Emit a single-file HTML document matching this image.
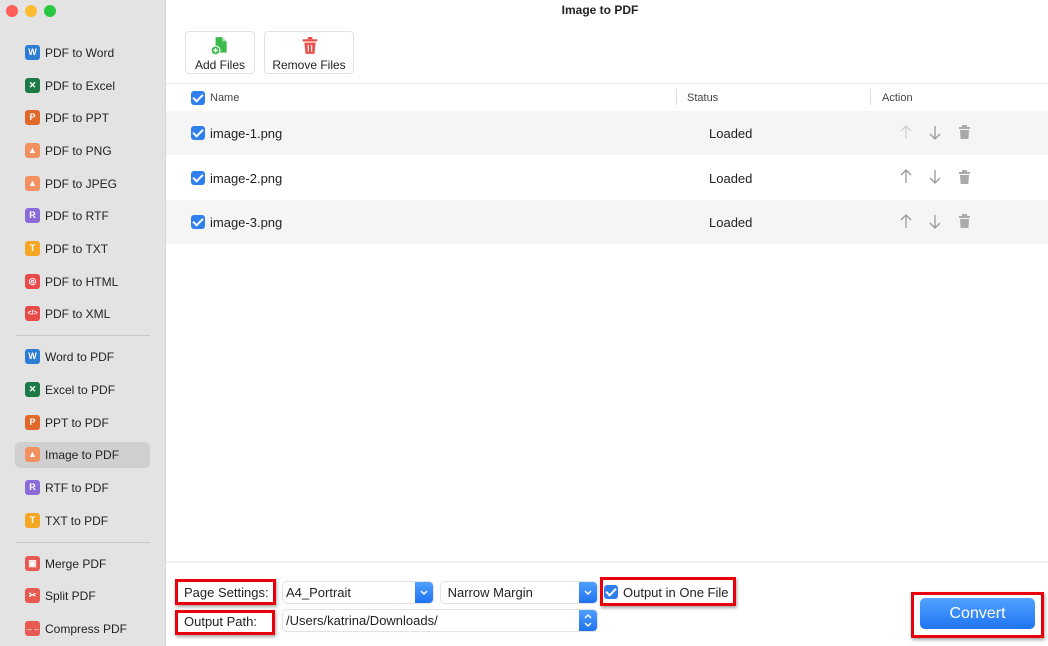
<!DOCTYPE html>
<html><head><meta charset="utf-8"><style>
*{margin:0;padding:0;box-sizing:border-box}
body{width:1048px;height:646px;overflow:hidden;font-family:"Liberation Sans",sans-serif;background:#fff;position:relative;color:#222}
.abs{position:absolute}
#side{left:0;top:0;width:166px;height:646px;background:#e3e3e3;border-right:1px solid #d6d6d6}
.dot{position:absolute;top:5px;width:12px;height:12px;border-radius:50%}
.it{position:absolute;left:25px;font-size:12px;color:#222;height:16px;line-height:16px;white-space:nowrap}
.ic{display:inline-block;width:15px;height:15px;border-radius:3px;vertical-align:top;margin-right:5px;color:#fff;font-size:9px;font-weight:bold;text-align:center;line-height:15px}
.sel{position:absolute;left:15px;top:442px;width:135px;height:26px;background:#cfcfcf;border-radius:5px}
.div{position:absolute;left:16px;width:134px;height:1px;background:#c9c9c9}
.cb{position:absolute;width:14px;height:14px;border-radius:3px;background:#2f80ed}
.cb:after{content:"";position:absolute;left:4px;top:1px;width:4px;height:8px;border:solid #fff;border-width:0 2px 2px 0;transform:rotate(45deg)}
.row{position:absolute;left:166px;width:882px;height:44px}
.rt{position:absolute;font-size:13px;color:#222}
.btn{position:absolute;top:31px;height:43px;border:1px solid #e2e2e2;border-radius:4px;background:#fff;font-size:12px;text-align:center;color:#222}
.red{position:absolute;border:3px solid #e8000b;box-shadow:1px 2px 3px rgba(0,0,0,.35)}
.fld{position:absolute;height:21px;background:#fff;border-radius:4px;box-shadow:0 0 0 1px #e3e3e3,0 1px 1px rgba(0,0,0,.1);font-size:13px;line-height:21px;padding-left:3px;color:#222}
.arr{position:absolute;right:0;top:0;width:18px;height:21px;background:linear-gradient(#4fa0ff,#1f72f0);border-radius:0 4px 4px 0}
.lbl{position:absolute;font-size:13px;color:#222}
</style></head><body>
<div id="side" class="abs">
<div class="dot" style="left:6px;background:#fe5f57"></div>
<div class="dot" style="left:25px;background:#febc2e"></div>
<div class="dot" style="left:44px;background:#28c840"></div>
<div class="sel"></div>
<div class="it" style="top:45px"><span class="ic" style="background:#2b7cd3">W</span>PDF to Word</div>
<div class="it" style="top:78px"><span class="ic" style="background:#1d7a47">✕</span>PDF to Excel</div>
<div class="it" style="top:110px"><span class="ic" style="background:#e2682a">P</span>PDF to PPT</div>
<div class="it" style="top:143px"><span class="ic" style="background:#f39060">▲</span>PDF to PNG</div>
<div class="it" style="top:176px"><span class="ic" style="background:#f39060">▲</span>PDF to JPEG</div>
<div class="it" style="top:208px"><span class="ic" style="background:#8c6bd8">R</span>PDF to RTF</div>
<div class="it" style="top:241px"><span class="ic" style="background:#f5a623">T</span>PDF to TXT</div>
<div class="it" style="top:274px"><span class="ic" style="background:#e84a4a">◎</span>PDF to HTML</div>
<div class="it" style="top:306px"><span class="ic" style="background:#e84a4a;font-size:7px">&lt;/&gt;</span>PDF to XML</div>
<div class="div" style="top:335px"></div>
<div class="it" style="top:349px"><span class="ic" style="background:#2b7cd3">W</span>Word to PDF</div>
<div class="it" style="top:382px"><span class="ic" style="background:#1d7a47">✕</span>Excel to PDF</div>
<div class="it" style="top:415px"><span class="ic" style="background:#e2682a">P</span>PPT to PDF</div>
<div class="it" style="top:447px"><span class="ic" style="background:#f39060">▲</span>Image to PDF</div>
<div class="it" style="top:480px"><span class="ic" style="background:#8c6bd8">R</span>RTF to PDF</div>
<div class="it" style="top:513px"><span class="ic" style="background:#f5a623">T</span>TXT to PDF</div>
<div class="div" style="top:542px"></div>
<div class="it" style="top:556px"><span class="ic" style="background:#e85a50">▣</span>Merge PDF</div>
<div class="it" style="top:588px"><span class="ic" style="background:#e85a50">✂</span>Split PDF</div>
<div class="it" style="top:621px"><span class="ic" style="background:#e85a50;font-size:8px">→←</span>Compress PDF</div>
</div>

<div class="abs" style="left:166px;width:868px;top:3px;text-align:center;font-size:12px;font-weight:bold;color:#222">Image to PDF</div>

<div class="btn" style="left:185px;width:70px">
<svg width="20" height="20" viewBox="0 0 18 18" style="position:absolute;left:24px;top:4px"><path d="M5 1h6l4 4v10H5z" fill="#3dba4e"/><path d="M11 1v4h4" fill="#9be0a5"/><circle cx="5" cy="13" r="4" fill="#3dba4e" stroke="#fff" stroke-width="1"/><path d="M5 11v4M3 13h4" stroke="#fff" stroke-width="1.3"/></svg>
<div style="position:absolute;top:26px;width:100%">Add Files</div></div>
<div class="btn" style="left:264px;width:90px">
<svg width="18" height="18" viewBox="0 0 16 16" style="position:absolute;left:36px;top:5px"><rect x="1.5" y="2" width="13" height="2" fill="#e8504a"/><rect x="6" y="0" width="4" height="2" fill="#e8504a"/><path d="M3 5h10l-1 10H4z" fill="#e8504a"/><path d="M6.5 7v6M9.5 7v6" stroke="#fff" stroke-width="1"/></svg>
<div style="position:absolute;top:26px;width:100%">Remove Files</div></div>

<div class="abs" style="left:166px;top:83px;width:882px;height:1px;background:#ebebeb"></div>
<div class="cb" style="left:191px;top:91px"></div>
<div class="abs" style="left:210px;top:92px;font-size:11px;color:#444">Name</div>
<div class="abs" style="left:676px;top:89px;width:1px;height:16px;background:#ddd"></div>
<div class="abs" style="left:687px;top:92px;font-size:11px;color:#444">Status</div>
<div class="abs" style="left:870px;top:89px;width:1px;height:16px;background:#ddd"></div>
<div class="abs" style="left:882px;top:92px;font-size:11px;color:#444">Action</div>

<div class="row" style="top:111px;background:#f5f5f5"></div>
<div class="row" style="top:200px;background:#f5f5f5"></div>

<div class="cb" style="left:191px;top:126px"></div><div class="rt" style="left:210px;top:126px">image-1.png</div><div class="rt" style="left:709px;top:126px">Loaded</div>
<div class="cb" style="left:191px;top:171px"></div><div class="rt" style="left:210px;top:171px">image-2.png</div><div class="rt" style="left:709px;top:171px">Loaded</div>
<div class="cb" style="left:191px;top:215px"></div><div class="rt" style="left:210px;top:215px">image-3.png</div><div class="rt" style="left:709px;top:215px">Loaded</div>

<svg class="abs" style="left:898px;top:124px" width="80" height="110" viewBox="0 0 80 110">
<g fill="none" stroke-width="1.3">
<path d="M8 2v13M3 7l5-5 5 5" stroke="#d0d0d0"/><path d="M37 2v13M32 10l5 5 5-5" stroke="#999"/>
<path d="M8 46v13M3 51l5-5 5 5" stroke="#999"/><path d="M37 46v13M32 54l5 5 5-5" stroke="#999"/>
<path d="M8 91v13M3 96l5-5 5 5" stroke="#999"/><path d="M37 91v13M32 99l5 5 5-5" stroke="#999"/>
</g>
<g fill="#aaa"><rect x="61" y="3" width="11" height="2"/><rect x="64" y="1" width="5" height="2"/><path d="M62 6h9l-.6 9h-7.8z"/>
<rect x="61" y="48" width="11" height="2"/><rect x="64" y="46" width="5" height="2"/><path d="M62 51h9l-.6 9h-7.8z"/>
<rect x="61" y="92" width="11" height="2"/><rect x="64" y="90" width="5" height="2"/><path d="M62 95h9l-.6 9h-7.8z"/></g>
</svg>

<div class="abs" style="left:166px;top:561px;width:882px;height:2px;background:#f0f0f0"></div>

<div class="red" style="left:175px;top:579px;width:101px;height:26px"></div>
<div class="lbl" style="left:184px;top:585px">Page Settings:</div>
<div class="fld" style="left:283px;top:582px;width:150px">A4_Portrait<div class="arr"><svg width="18" height="21"><path d="M6 9l3 3 3-3" stroke="#fff" stroke-width="1.5" fill="none"/></svg></div></div>
<div class="fld" style="left:441px;top:582px;width:156px">&nbsp;Narrow Margin<div class="arr"><svg width="18" height="21"><path d="M6 9l3 3 3-3" stroke="#fff" stroke-width="1.5" fill="none"/></svg></div></div>
<div class="red" style="left:600px;top:577px;width:136px;height:29px"></div>
<div class="cb" style="left:604px;top:585px"></div>
<div class="lbl" style="left:623px;top:585px">Output in One File</div>

<div class="red" style="left:175px;top:610px;width:100px;height:25px"></div>
<div class="lbl" style="left:184px;top:614px">Output Path:</div>
<div class="fld" style="left:283px;top:610px;width:314px">/Users/katrina/Downloads/<div class="arr"><svg width="18" height="21"><path d="M6 8l3-3 3 3M6 13l3 3 3-3" stroke="#fff" stroke-width="1.5" fill="none"/></svg></div></div>

<div class="red" style="left:911px;top:592px;width:133px;height:46px"></div>
<div class="abs" style="left:920px;top:598px;width:115px;height:31px;border-radius:5px;background:linear-gradient(#52a2ff,#1f74f2);color:#fff;font-size:16px;text-align:center;line-height:31px">Convert</div>
</body></html>
